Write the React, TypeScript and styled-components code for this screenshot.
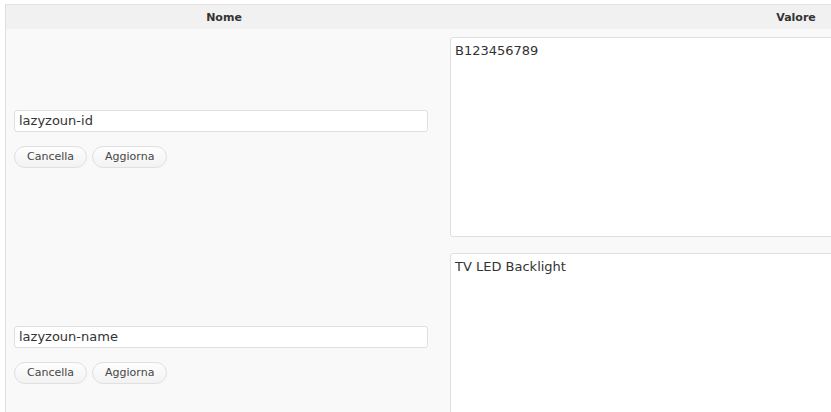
import React from "react";
import styled, { createGlobalStyle } from "styled-components";

const Global = createGlobalStyle`
  html, body { margin: 0; padding: 0; background: #ffffff; overflow: hidden; }
  body { font-family: "DejaVu Sans", Verdana, sans-serif; }
`;

const Table = styled.div`
  margin: 4px 0 0 5px;
  width: 1144px;
  border-left: 1px solid #dfdfdf;
  border-top: 1px solid #e3e3e3;
  background: #f9f9f9;
  min-height: 420px;
`;

const HeaderRow = styled.div`
  display: grid;
  grid-template-columns: 436px 1fr;
  height: 24px;
  background: #f1f1f1;
`;

const HeadCell = styled.div`
  display: flex;
  align-items: center;
  justify-content: center;
  font-size: 11px;
  font-weight: bold;
  color: #333333;
`;

const Row = styled.div`
  display: grid;
  grid-template-columns: 436px 1fr;
  height: 216px;
`;

const LeftCell = styled.div`
  display: flex;
  flex-direction: column;
  justify-content: center;
  padding: 3px 8px 0 8px;
`;

const KeyInput = styled.input`
  box-sizing: border-box;
  width: 414px;
  height: 22px;
  border: 1px solid #dfdfdf;
  border-radius: 3px;
  background: #ffffff;
  padding: 0 4px;
  font-family: "DejaVu Sans", Verdana, sans-serif;
  font-size: 13px;
  color: #333;
  outline: none;
`;

const Buttons = styled.div`
  display: flex;
  gap: 5px;
  margin-top: 14px;
`;

const Button = styled.button`
  box-sizing: border-box;
  height: 22px;
  padding: 0 12px;
  border: 1px solid #e0e0e0;
  border-radius: 11px;
  background: linear-gradient(#fefefe, #f2f2f2);
  font-family: "DejaVu Sans", Verdana, sans-serif;
  font-size: 11px;
  color: #464646;
  cursor: pointer;
`;

const RightCell = styled.div`
  padding: 8px 0 8px 8px;
`;

const ValueArea = styled.textarea`
  box-sizing: border-box;
  display: block;
  width: 680px;
  height: 200px;
  border: 1px solid #dfdfdf;
  border-radius: 3px;
  background: #ffffff;
  padding: 5px 4px;
  resize: none;
  font-family: "DejaVu Sans", Verdana, sans-serif;
  font-size: 13px;
  line-height: 16px;
  color: #333;
  outline: none;
`;

const fields = [
  { key: "lazyzoun-id", value: "B123456789" },
  { key: "lazyzoun-name", value: "TV LED Backlight" },
];

export default function App() {
  return (
    <>
      <Global />
      <Table>
        <HeaderRow>
          <HeadCell>Nome</HeadCell>
          <HeadCell>Valore</HeadCell>
        </HeaderRow>
        {fields.map((f) => (
          <Row key={f.key}>
            <LeftCell>
              <KeyInput defaultValue={f.key} />
              <Buttons>
                <Button>Cancella</Button>
                <Button>Aggiorna</Button>
              </Buttons>
            </LeftCell>
            <RightCell>
              <ValueArea defaultValue={f.value} />
            </RightCell>
          </Row>
        ))}
      </Table>
    </>
  );
}
